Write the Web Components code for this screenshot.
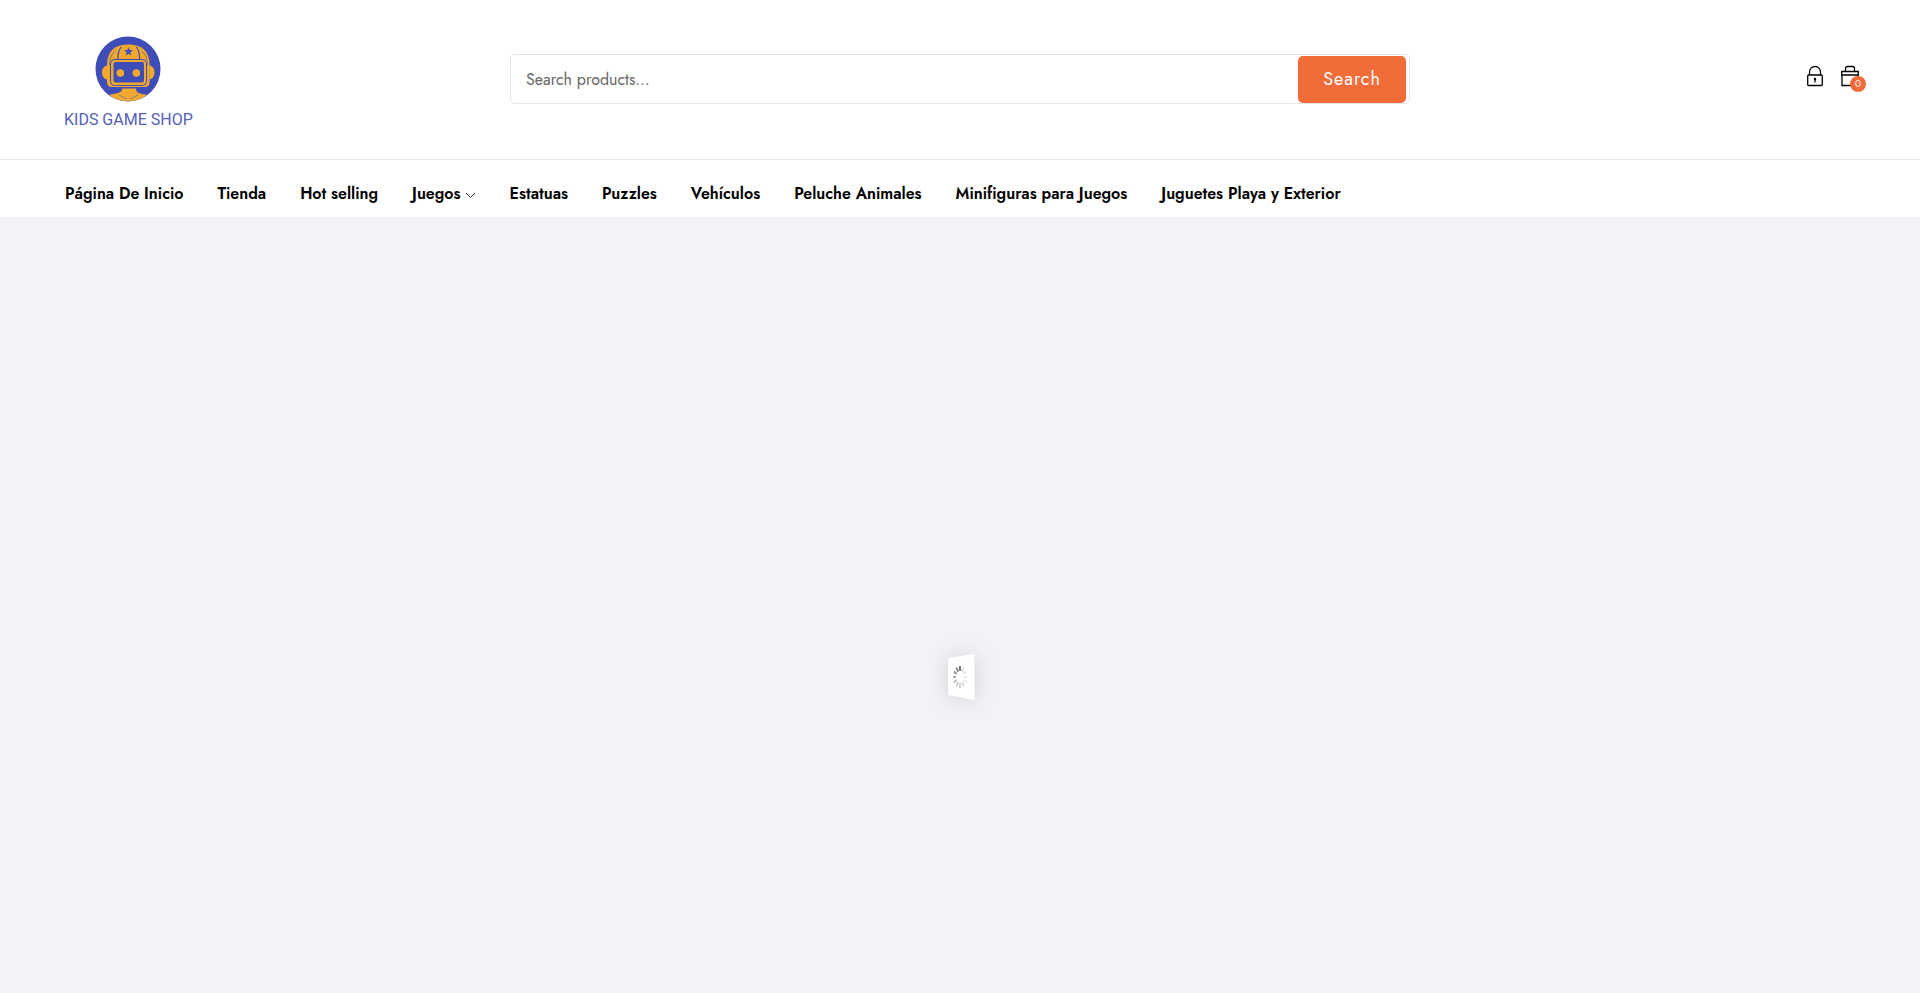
<!DOCTYPE html>
<html lang="es">
<head>
<meta charset="utf-8">
<meta name="viewport" content="width=device-width, initial-scale=1">
<title>Kids Game Shop</title>
<style>
body{margin:0;background:#f1f3f7;color:#000;font-family:Jost,Lato,sans-serif;font-size:16px}
</style>
</head>
<body>
<shop-page>
  <shop-header slot="header"></shop-header>
  <shop-nav slot="nav">
    <nav-item href="#inicio">Página De Inicio</nav-item>
    <nav-item href="#tienda">Tienda</nav-item>
    <nav-item href="#hot">Hot selling</nav-item>
    <nav-item href="#juegos" menu>Juegos</nav-item>
    <nav-item href="#estatuas">Estatuas</nav-item>
    <nav-item href="#puzzles">Puzzles</nav-item>
    <nav-item href="#vehiculos">Vehículos</nav-item>
    <nav-item href="#peluche">Peluche Animales</nav-item>
    <nav-item href="#minifiguras">Minifiguras para Juegos</nav-item>
    <nav-item href="#juguetes">Juguetes Playa y Exterior</nav-item>
  </shop-nav>
  <page-loader></page-loader>
</shop-page>
<script>
const define = (name, html, setup) => customElements.define(name, class extends HTMLElement {
  connectedCallback() {
    if (this.shadowRoot) return;
    const root = this.attachShadow({ mode: 'open' });
    root.innerHTML = html;
    if (setup) setup(this, root);
  }
});

define('shop-page', `
<style>
:host{display:flex;flex-direction:column;min-height:100vh}
header{background:#fff}
main{flex:1;display:grid;place-items:center;padding-top:144px}
</style>
<header><slot name="header"></slot><slot name="nav"></slot></header>
<main><slot></slot></main>`);

define('shop-header', `
<style>
:host{display:grid;grid-template-columns:1fr 2fr 1fr;align-items:start;padding:36px 60px 28px;border-bottom:1px solid #e5e5e5}
search-box{margin-top:18px}
shop-actions{justify-self:end;margin-top:29px}
</style>
<shop-logo></shop-logo><search-box></search-box><shop-actions></shop-actions>`);

define('shop-logo', `
<style>
:host{display:block;padding-left:4px}
a{display:flex;width:max-content;flex-direction:column;align-items:center;gap:7px;color:#5560b8;text-decoration:none;font:400 16px/22px Roboto,sans-serif}
svg{display:block}
</style>
<a href="#inicio">
<svg width="66" height="66" viewBox="0 0 66 66" aria-hidden="true">
<circle cx="33" cy="33" r="32.500" fill="#3f4db8"/>
<g fill="#f0a92e">
<path d="M12 29.500q-5 1-5 7t5 7zM54.500 29.500q5 1 5 7t-5 7z"/>
<path d="M12 29C12 15 20 8.500 33.300 8.500S54.600 15 54.600 29v17q0 5-5 5H17q-5 0-5-5z"/>
<path d="M27.500 52.500h13.500q0 4 4 5l7 1.500Q44 65 33 65t-19-6l7-1.500q6-1 6.500-5z"/>
</g>
<g fill="none" stroke="#3f4db8">
<rect x="15.500" y="23.500" width="36" height="26" rx="4"/>
<path d="M23 23v-3q0-5 3-9M44.500 23v-3q0-5-3-9" stroke-width="1.200"/>
<path d="M14.500 29q-.5-9 6-14M52.500 29q.5-9-6-14" stroke-width=".6"/>
<path d="M24 59l8 4M43 59l-8 4" stroke-width=".5"/>
</g>
<rect x="18.500" y="26" width="30.500" height="20.500" rx="2" fill="#3f4db8"/>
<path d="M33.500 11l1.200 3.100 3.400.1-2.700 2.100 1 3.300-2.900-1.900-2.900 1.900 1-3.300-2.700-2.100 3.400-.1z" fill="#3f4db8"/>
<circle cx="25.300" cy="37" r="3.800" fill="#f0a92e"/><circle cx="41.300" cy="37" r="3.800" fill="#f0a92e"/>
</svg>
<span>KIDS GAME SHOP</span></a>`);

define('search-box', `
<style>
:host{display:block}
form{display:flex;box-sizing:border-box;height:50px;margin:0;padding:1px 3px 0 0;border:1px solid #e5e5e5;border-radius:5px;background:#fff}
input{flex:1;min-width:0;border:0;outline:0;padding:0 15px;background:none;font:400 16px/24px Jost,Lato,sans-serif;color:#111}
input::placeholder{color:#666;opacity:1}
button{width:108px;padding:0 0 2px;border:0;border-radius:5px;background:#f26c3a;color:#fff;font:400 18px/24px Jost,Lato,sans-serif;letter-spacing:1px}
</style>
<form role="search"><input type="search" aria-label="Search products" placeholder="Search products…"><button type="button">Search</button></form>`);

define('shop-actions', `
<style>
:host{display:flex;gap:18px;padding-right:1px}
a{position:relative;display:block;color:#000}
svg{display:block}
span{position:absolute;left:9px;top:11px;width:16px;height:16px;border-radius:8px;background:#f26c3a;color:#fff;text-align:center;font-size:10px;line-height:16px}
</style>
<a href="#cuenta" aria-label="Account"><svg width="16" height="22" viewBox="0 0 16 22" fill="none" stroke="currentColor" stroke-width="1.300"><rect x=".7" y="10" width="14.600" height="10.500" rx="1"/><path d="M2.500 10V7a5.500 5.500 0 0 1 11 0v3M8 13.500v4"/><circle cx="8" cy="14" r=".6"/></svg></a>
<a href="#carrito" aria-label="Cart"><svg width="18" height="22" viewBox="0 0 18 22" fill="none" stroke="currentColor" stroke-width="1.300"><path d="M.7 6.500h16.600v3.500H.7zM1 10v10.500h16V10M4.500 6.500V3.500q0-2 2-2h5q2 0 2 2v3"/></svg><span>0</span></a>`);

define('shop-nav', `
<style>
nav{display:flex;flex-wrap:wrap;gap:0 34px;padding:20px 65px 10px}
</style>
<nav aria-label="Principal"><slot></slot></nav>`);

define('nav-item', `
<style>
:host{display:block}
a{display:flex;align-items:center;gap:4px;color:#000;text-decoration:none;white-space:nowrap;font-weight:600;line-height:27px}
svg{display:none;margin-top:3px}
:host([menu]) svg{display:block}
</style>
<a><slot></slot><svg width="11" height="7" viewBox="0 0 11 7" fill="none" stroke="currentColor" stroke-width=".8" aria-hidden="true"><path d="M1 1l4.500 4.500L10 1"/></svg></a>`,
(el, root) => { root.querySelector('a').href = el.getAttribute('href'); });

define('page-loader', `
<style>
:host{display:block}
svg{display:block;overflow:visible;filter:drop-shadow(0 1px 10px #00000024)}
</style>
<svg width="28" height="46" viewBox="0 0 28 46" role="img" aria-label="Cargando"><path d="M2 4L28.500 0V46L2 41z" fill="#fff"/><g stroke-width="2"></g></svg>`,
(el, root) => {
  const g = root.querySelector('g');
  const shades = ['#777','#ddd','#e8e8e8','#eaeaea','#e8e8e8','#ddd','#d4d4d4','#ccc','#bbb','#aaa','#999','#888'];
  g.innerHTML = shades.map((c, i) => {
    const a = i * Math.PI / 6, x = Math.sin(a), y = -Math.cos(a);
    return `<path stroke="${c}" d="M${14 + x * 4} ${23 + y * 6}L${14 + x * 7} ${23 + y * 11}"/>`;
  }).join('');
});
</script>
</body>
</html>
